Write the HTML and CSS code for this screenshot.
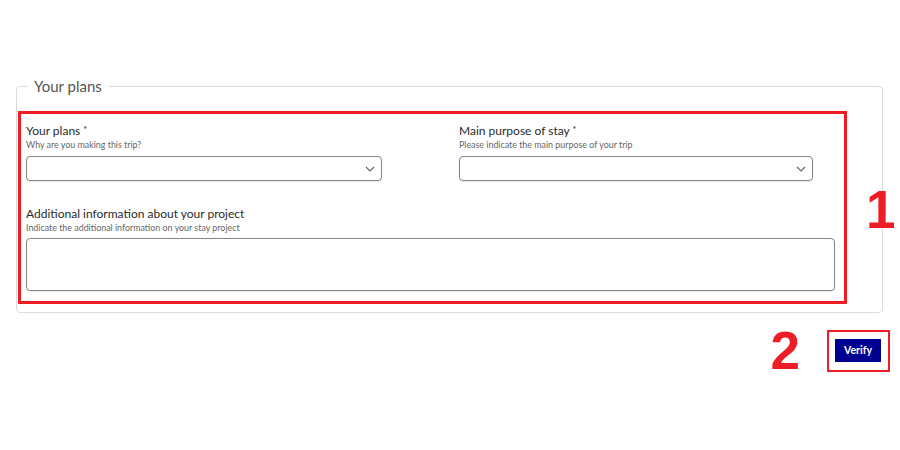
FILE: index.html
```html
<!DOCTYPE html>
<html lang="en">
<head>
  <meta charset="UTF-8" />
  <meta name="viewport" content="width=device-width, initial-scale=1.0" />
  <title>Your plans</title>
  <link rel="stylesheet" href="styles.css">
</head>
<body>
  <div class="page">
    <fieldset class="section">
      <legend>Your plans</legend>

      <div class="highlight">
        <div class="row">
          <div class="field">
            <label for="plans">Your plans <span class="req">*</span></label>
            <p class="hint">Why are you making this trip?</p>
            <div class="select-wrap">
              <select id="plans"><option></option></select>
              <svg class="chevron" width="10" height="6" viewBox="0 0 10 6"><path d="M1 1l4 4 4-4" fill="none" stroke="#666" stroke-width="1.2"/></svg>
            </div>
          </div>
          <div class="field">
            <label for="purpose">Main purpose of stay <span class="req">*</span></label>
            <p class="hint">Please indicate the main purpose of your trip</p>
            <div class="select-wrap">
              <select id="purpose"><option></option></select>
              <svg class="chevron" width="10" height="6" viewBox="0 0 10 6"><path d="M1 1l4 4 4-4" fill="none" stroke="#666" stroke-width="1.2"/></svg>
            </div>
          </div>
        </div>

        <div class="field wide">
          <label for="info">Additional information about your project</label>
          <p class="hint">Indicate the additional information on your stay project</p>
          <textarea id="info"></textarea>
        </div>
      </div>
    </fieldset>

    <div class="actions">
      <span class="step">2</span>
      <div class="frame">
        <button>Verify</button>
      </div>
    </div>

    <span class="step step-one">1</span>
  </div>
</body>
</html>
```

FILE: styles.css
```css
:root {
  --red: #ee1c25;
  --navy: #000091;
  --text: #2a2a2a;
  --muted: #666;
}
* {
  margin: 0;
  padding: 0;
  box-sizing: border-box;
}
body {
  font-family: Lato, 'Noto Sans', sans-serif;
  background: #fff;
  color: var(--text);
}
.page {
  position: relative;
  width: 900px;
  height: 450px;
  padding: 77px 17px 0 16px;
}
.section {
  padding: 16px 0 8px 1px;
  border: 1px solid #dcdcdc;
  border-radius: 4px;
}
.section legend {
  margin-left: 10px;
  padding: 0 6px;
  font-size: 15px;
  line-height: 18px;
  color: #555;
}
.highlight {
  width: 829px;
  border: 3px solid var(--red);
  padding: 8px 9px 10px 5px;
}
.row {
  display: grid;
  grid-template-columns: 356px 354px;
  column-gap: 77px;
  margin-bottom: 25px;
}
label {
  display: block;
  font-size: 12px;
  line-height: 16px;
  color: var(--text);
}
.req {
  font-size: 9px;
  vertical-align: 2px;
}
.hint {
  font-size: 8.9px;
  line-height: 11px;
  color: var(--muted);
}
.select-wrap {
  position: relative;
  margin-top: 6px;
}
select, textarea {
  display: block;
  width: 100%;
  border: 1px solid #858585;
  border-radius: 4px;
  background: #fff;
  box-shadow: 0 1px 1px rgba(0, 0, 0, 0.08);
  font: inherit;
}
select {
  appearance: none;
  height: 25px;
}
.chevron {
  position: absolute;
  right: 7px;
  top: 10px;
}
.wide textarea {
  margin-top: 5px;
  height: 53px;
  resize: none;
}
.actions {
  display: flex;
  justify-content: flex-end;
  align-items: center;
  gap: 27px;
  margin: 11px -7px 0 0;
}
.step {
  font-family: 'Liberation Sans', Arial, sans-serif;
  font-weight: 900;
  font-size: 53px;
  line-height: 1;
  color: var(--red);
}
.step-one {
  position: absolute;
  left: 866px;
  top: 183px;
}
.frame {
  border: 2px solid var(--red);
  padding: 7px 7px 8px 6px;
}
.frame button {
  display: block;
  width: 46px;
  height: 23px;
  border: none;
  background: var(--navy);
  color: #fff;
  font-family: Lato, sans-serif;
  font-weight: 700;
  font-size: 10.5px;
  cursor: pointer;
}
```
